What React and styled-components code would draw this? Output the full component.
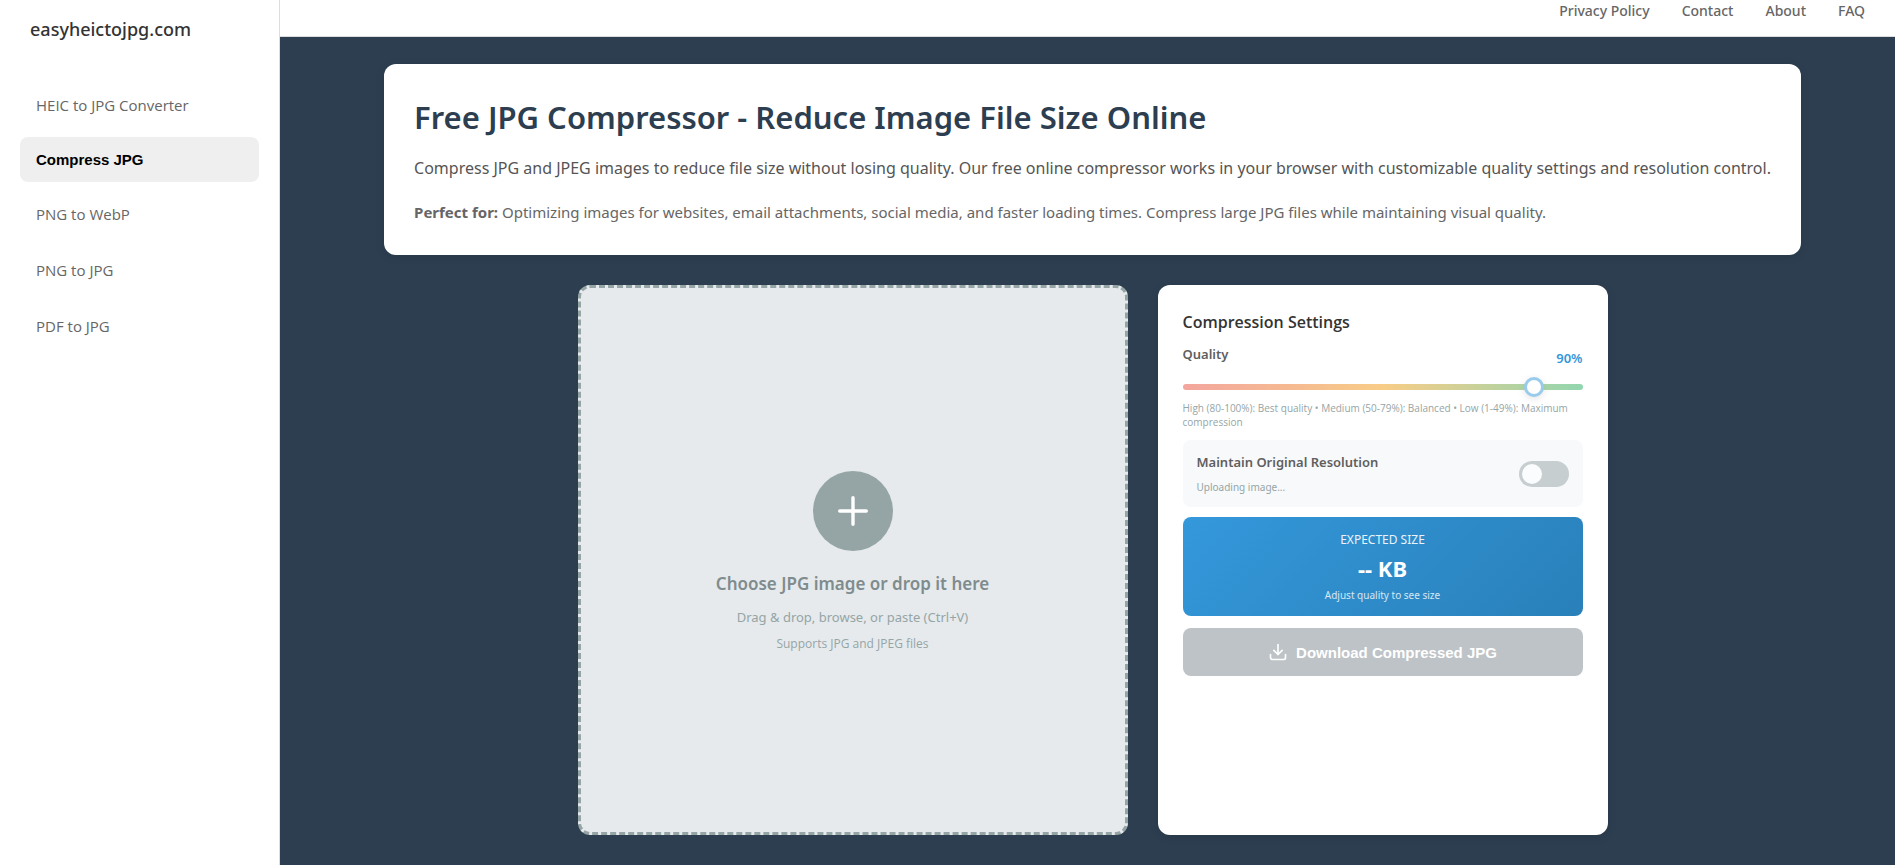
import React, { useState } from 'react';
import styled, { createGlobalStyle, ThemeProvider } from 'styled-components';

const theme = {
    page: '#2c3e50',
    primary: '#3498db',
    primary_dark: '#2980b9',
    text_primary: '#333',
    text_secondary: '#666',
    muted: '#95a5a6',
    line: '#ddd',
    body_font: "'Noto Sans', 'Open Sans', sans-serif",
    nav_font: "'Open Sans', 'Noto Sans', sans-serif",
    button_font: "'Liberation Sans', Arial, sans-serif",
};

const GlobalStyle = createGlobalStyle`
    * {
        box-sizing: border-box;
        margin: 0;
        padding: 0;
    }
    body {
        background: ${theme.page};
        font-family: ${theme.body_font};
        color: ${theme.text_primary};
    }
`;

const Layout = styled.div`
    display: flex;
    min-height: 100vh;
`;

const Sidebar = styled.aside`
    flex: 0 0 280px;
    background: #fff;
    border-right: 1px solid ${({ theme }) => theme.line};
`;

const Logo = styled.div`
    padding: 15px 30px 0;
    font-size: 18px;
    line-height: 28px;
    font-weight: 500;
`;

const Menu = styled.nav`
    display: flex;
    flex-direction: column;
    gap: 8px;
    padding: 38px 20px;
`;

const MenuLink = styled.a`
    padding: 0 16px;
    font-family: ${({ theme }) => theme.nav_font};
    font-size: 15px;
    line-height: 48px;
    font-weight: 500;
    color: ${({ theme }) => theme.text_secondary};
    text-decoration: none;
    border-radius: 8px;

    &:hover {
        background: #f5f5f5;
    }
`;

const MenuButton = styled.button`
    padding: 0 16px;
    font-family: ${({ theme }) => theme.button_font};
    font-size: 15px;
    line-height: 45px;
    font-weight: 600;
    text-align: left;
    color: #000;
    background: #efefef;
    border: none;
    border-radius: 8px;
    cursor: pointer;
`;

const Content = styled.div`
    flex: 1;
    min-width: 0;
    display: flex;
    flex-direction: column;
`;

const Header = styled.header`
    display: flex;
    justify-content: flex-end;
    gap: 32px;
    padding: 0 30px 14px;
    background: #fff;
    border-bottom: 1px solid ${({ theme }) => theme.line};
`;

const HeaderLink = styled.a`
    font-size: 14px;
    line-height: 22px;
    font-weight: 500;
    color: ${({ theme }) => theme.text_secondary};
    text-decoration: none;
`;

const Main = styled.main`
    display: flex;
    flex-direction: column;
    align-items: center;
    gap: 30px;
    padding: 27px 20px 30px 30px;
`;

const Card = styled.section`
    background: #fff;
    border-radius: 12px;
    box-shadow: 0 2px 10px rgba(0, 0, 0, 0.1);
`;

const Intro = styled(Card)`
    padding: 30px;
`;

const Title = styled.h1`
    font-size: 31px;
    line-height: 47px;
    font-weight: 600;
    color: ${({ theme }) => theme.page};
`;

const Lead = styled.p`
    margin-top: 13px;
    font-size: 16px;
    line-height: 28px;
    color: #555;
`;

const Desc = styled.p`
    margin-top: 18px;
    font-size: 15px;
    line-height: 25px;
    color: ${({ theme }) => theme.text_secondary};
`;

const Workspace = styled.div`
    display: flex;
    justify-content: center;
    flex-wrap: wrap;
    gap: 30px;
    width: 100%;
`;

const DropZone = styled.section`
    display: flex;
    flex-direction: column;
    align-items: center;
    justify-content: center;
    flex: 0 1 550px;
    min-height: 550px;
    padding-top: 4px;
    background: #e6eaed;
    border: 3px dashed ${({ theme }) => theme.muted};
    border-radius: 12px;
    color: ${({ theme }) => theme.muted};
`;

const PlusCircle = styled.button`
    display: flex;
    align-items: center;
    justify-content: center;
    width: 80px;
    height: 80px;
    margin-bottom: 20px;
    color: #fff;
    background: ${({ theme }) => theme.muted};
    border: none;
    border-radius: 50%;
`;

const DropTitle = styled.h2`
    font-size: 17px;
    line-height: 26px;
    font-weight: 600;
    color: #7f8c8d;
`;

const DropText = styled.p`
    margin-top: 10px;
    font-size: 13px;
    line-height: 20px;
`;

const DropNote = styled.p`
    margin-top: 8px;
    font-family: ${({ theme }) => theme.nav_font};
    font-size: 12px;
    line-height: 18px;
`;

const Settings = styled(Card)`
    flex: 0 1 450px;
    padding: 25px;
`;

const SettingsTitle = styled.h2`
    font-family: ${({ theme }) => theme.nav_font};
    font-size: 16px;
    line-height: 24px;
    font-weight: 600;
`;

const QualityRow = styled.div`
    display: flex;
    justify-content: space-between;
    margin-top: 10px;
`;

const SettingLabel = styled.label`
    display: block;
    font-size: 13px;
    line-height: 20px;
    font-weight: 600;
    color: #5f5f5f;
`;

const QualityValue = styled.output`
    padding-top: 4px;
    font-size: 13px;
    line-height: 20px;
    font-weight: 600;
    color: ${({ theme }) => theme.primary};
`;

const Slider = styled.input`
    display: block;
    width: 100%;
    height: 6px;
    margin-top: 16px;
    appearance: none;
    border-radius: 3px;
    background: linear-gradient(to right, #e74c3c, #f39c12, #27ae60);
    opacity: 0.5;

    &::-webkit-slider-thumb {
        appearance: none;
        width: 20px;
        height: 20px;
        background: #fff;
        border: 3px solid ${({ theme }) => theme.primary};
        border-radius: 50%;
        box-shadow: 0 2px 6px rgba(0, 0, 0, 0.2);
    }
`;

const Hint = styled.p`
    margin-top: 11px;
    font-family: ${({ theme }) => theme.nav_font};
    font-size: 10px;
    line-height: 14px;
    color: ${({ theme }) => theme.muted};
`;

const Resolution = styled.div`
    display: flex;
    justify-content: space-between;
    align-items: center;
    margin-top: 11px;
    padding: 12px 14px 11px;
    background: #f8f9fb;
    border-radius: 8px;
`;

const ResolutionNote = styled.p`
    margin-top: 6px;
    font-size: 10px;
    line-height: 18px;
    color: ${({ theme }) => theme.muted};
`;

const Toggle = styled.input`
    appearance: none;
    display: flex;
    width: 50px;
    height: 26px;
    padding: 3px;
    background: ${({ theme }) => theme.muted};
    border-radius: 13px;
    opacity: 0.5;

    &::before {
        content: '';
        width: 20px;
        height: 20px;
        background: #fff;
        border-radius: 50%;
    }
    &:checked {
        justify-content: flex-end;
        background: ${({ theme }) => theme.primary};
    }
`;

const SizeBox = styled.div`
    display: flex;
    flex-direction: column;
    align-items: center;
    margin-top: 10px;
    padding: 14px 15px 12px;
    color: #fff;
    background: linear-gradient(135deg, ${({ theme }) => theme.primary}, ${({ theme }) => theme.primary_dark});
    border-radius: 8px;
`;

const SizeLabel = styled.div`
    font-size: 12px;
    line-height: 18px;
    text-transform: uppercase;
    opacity: 0.9;
`;

const SizeValue = styled.div`
    margin: 4px 0;
    font-size: 22px;
    line-height: 30px;
    font-weight: 700;
`;

const SizeNote = styled.div`
    font-size: 10px;
    line-height: 17px;
    opacity: 0.8;
`;

const DownloadButton = styled.button`
    display: flex;
    align-items: center;
    justify-content: center;
    gap: 8px;
    width: 100%;
    height: 48px;
    margin-top: 12px;
    font-family: ${({ theme }) => theme.button_font};
    font-size: 15px;
    font-weight: 600;
    color: #fff;
    background: #bdc3c7;
    border: none;
    border-radius: 8px;
`;

const PlusIcon = () => (
    <svg width="40" height="40" viewBox="0 0 40 40" fill="none" stroke="currentColor" strokeWidth="3.4" strokeLinecap="round">
        <path d="M20 6.7v26.6M6.7 20h26.6" />
    </svg>
);

const DownloadIcon = () => (
    <svg width="20" height="20" viewBox="0 0 24 24" fill="none" stroke="currentColor" strokeWidth="2" strokeLinecap="round" strokeLinejoin="round">
        <path d="M21 15v4a2 2 0 0 1-2 2H5a2 2 0 0 1-2-2v-4" />
        <polyline points="7 10 12 15 17 10" />
        <line x1="12" y1="15" x2="12" y2="3" />
    </svg>
);

const App = () => {
    const [quality, setQuality] = useState(90);

    return <ThemeProvider theme={theme}>
        <GlobalStyle />
        <Layout>
            <Sidebar>
                <Logo>easyheictojpg.com</Logo>
                <Menu>
                    <MenuLink href="#heic-to-jpg">HEIC to JPG Converter</MenuLink>
                    <MenuButton type="button">Compress JPG</MenuButton>
                    <MenuLink href="#png-to-webp">PNG to WebP</MenuLink>
                    <MenuLink href="#png-to-jpg">PNG to JPG</MenuLink>
                    <MenuLink href="#pdf-to-jpg">PDF to JPG</MenuLink>
                </Menu>
            </Sidebar>
            <Content>
                <Header>
                    <HeaderLink href="#privacy">Privacy Policy</HeaderLink>
                    <HeaderLink href="#contact">Contact</HeaderLink>
                    <HeaderLink href="#about">About</HeaderLink>
                    <HeaderLink href="#faq">FAQ</HeaderLink>
                </Header>
                <Main>
                    <Intro>
                        <Title>Free JPG Compressor - Reduce Image File Size Online</Title>
                        <Lead>
                            Compress JPG and JPEG images to reduce file size without losing quality. Our free online compressor works in your browser with customizable quality settings and resolution control.
                        </Lead>
                        <Desc>
                            <strong>Perfect for:</strong> Optimizing images for websites, email attachments, social media, and faster loading times. Compress large JPG files while maintaining visual quality.
                        </Desc>
                    </Intro>
                    <Workspace>
                        <DropZone>
                            <PlusCircle type="button" aria-label="Choose JPG image">
                                <PlusIcon />
                            </PlusCircle>
                            <DropTitle>Choose JPG image or drop it here</DropTitle>
                            <DropText>Drag &amp; drop, browse, or paste (Ctrl+V)</DropText>
                            <DropNote>Supports JPG and JPEG files</DropNote>
                        </DropZone>
                        <Settings>
                            <SettingsTitle>Compression Settings</SettingsTitle>
                            <QualityRow>
                                <SettingLabel htmlFor="quality">Quality</SettingLabel>
                                <QualityValue htmlFor="quality">{quality}%</QualityValue>
                            </QualityRow>
                            <Slider
                                id="quality"
                                type="range"
                                min="1"
                                max="100"
                                value={quality}
                                onChange={(e) => setQuality(Number(e.target.value))}
                            />
                            <Hint>High (80-100%): Best quality • Medium (50-79%): Balanced • Low (1-49%): Maximum compression</Hint>
                            <Resolution>
                                <div>
                                    <SettingLabel htmlFor="resolution">Maintain Original Resolution</SettingLabel>
                                    <ResolutionNote>Uploading image...</ResolutionNote>
                                </div>
                                <Toggle id="resolution" type="checkbox" disabled />
                            </Resolution>
                            <SizeBox>
                                <SizeLabel>Expected Size</SizeLabel>
                                <SizeValue>-- KB</SizeValue>
                                <SizeNote>Adjust quality to see size</SizeNote>
                            </SizeBox>
                            <DownloadButton type="button" disabled>
                                <DownloadIcon />
                                Download Compressed JPG
                            </DownloadButton>
                        </Settings>
                    </Workspace>
                </Main>
            </Content>
        </Layout>
    </ThemeProvider>
}

export default App
